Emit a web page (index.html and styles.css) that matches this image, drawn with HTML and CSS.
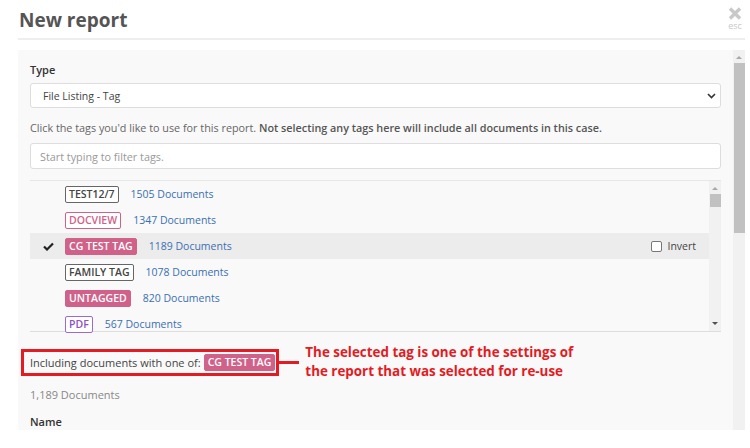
FILE: index.html
```html
<!DOCTYPE html>
<html lang="en">
<head>
  <meta charset="UTF-8">
  <title>New report</title>
  <link rel="stylesheet" href="styles.css">
</head>
<body>
  <div class="page">
    <header class="modal-head">
      <h1>New report</h1>
      <div class="close">
        <svg width="14" height="13" viewBox="0 0 14 13"><path d="M2 1.5 L12 11.5 M12 1.5 L2 11.5" stroke="#c9c9c9" stroke-width="3.4" stroke-linecap="butt"/></svg>
        <span>esc</span>
      </div>
    </header>

    <div class="panel">
      <div class="panel-body">
        <div class="field-label">Type</div>
        <div class="select">
          <span>File Listing - Tag</span>
          <svg width="9" height="6" viewBox="0 0 9 6"><path d="M1 1 L4.5 4.5 L8 1" fill="none" stroke="#333" stroke-width="1.6"/></svg>
        </div>
        <p class="help">Click the tags you'd like to use for this report. <strong>Not selecting any tags here will include all documents in this case.</strong></p>
        <div class="filter">Start typing to filter tags.</div>

        <div class="tag-list">
          <ul class="rows">
            <li class="row"><span class="check"></span><span class="tag outline">TEST12/7</span><a class="docs">1505 Documents</a></li>
            <li class="row"><span class="check"></span><span class="tag outline pink">DOCVIEW</span><a class="docs">1347 Documents</a></li>
            <li class="row selected">
              <span class="check">
                <svg width="11" height="9" viewBox="0 0 11 9"><path d="M1 4.5 L4 7.5 L10 1.5" fill="none" stroke="#222" stroke-width="2.2"/></svg>
              </span>
              <span class="tag solid">CG TEST TAG</span><a class="docs">1189 Documents</a>
              <label class="invert"><span class="box"></span>Invert</label>
            </li>
            <li class="row"><span class="check"></span><span class="tag outline">FAMILY TAG</span><a class="docs">1078 Documents</a></li>
            <li class="row"><span class="check"></span><span class="tag solid">UNTAGGED</span><a class="docs">820 Documents</a></li>
            <li class="row"><span class="check"></span><span class="tag outline purple">PDF</span><a class="docs">567 Documents</a></li>
          </ul>
          <div class="mini-scroll">
            <span class="arrow up light"></span>
            <span class="mini-thumb"></span>
            <span class="mini-track"></span>
            <span class="arrow down"></span>
          </div>
        </div>

        <div class="including-row">
          <div class="callout-box">Including documents with one of: <span class="tag solid">CG TEST TAG</span></div>
          <span class="connector"></span>
          <p class="note">The selected tag is one of the settings of<br>the report that was selected for re-use</p>
        </div>

        <div class="count">1,189 Documents</div>
        <div class="field-label name">Name</div>
      </div>

      <div class="scrollbar">
        <span class="arrow up light"></span>
        <span class="thumb"></span>
      </div>
    </div>
  </div>
</body>
</html>
```

FILE: styles.css
```css
body {
  margin: 0;
  background: #fff;
  font-family: "Open Sans", "Noto Sans", sans-serif;
  color: #444;
}
.page {
  width: 727px;
  padding-left: 18px;
}
.modal-head {
  display: flex;
  justify-content: space-between;
  align-items: flex-start;
  height: 38px;
  border-bottom: 2px solid #eee;
  margin-bottom: 10px;
}
.modal-head h1 {
  margin: 6px 0 0 1px;
  font-size: 19px;
  line-height: 28px;
  font-weight: 700;
  color: #555;
}
.close {
  display: flex;
  flex-direction: column;
  align-items: center;
  margin: 7px 3px 0 0;
}
.close span {
  font-size: 9px;
  line-height: 10px;
  color: #c9c9c9;
  margin-top: 1px;
}

.panel {
  display: flex;
  height: 380px;
  background: #f9f9f9;
  overflow: hidden;
}
.panel-body {
  flex: 1;
  padding: 12px 12px 0 12px;
  overflow: hidden;
}
.scrollbar {
  width: 12px;
  background: #f1f1f1;
  display: flex;
  flex-direction: column;
  align-items: center;
}
.scrollbar .thumb {
  width: 11px;
  height: 170px;
  background: #c1c1c1;
}
.arrow {
  width: 0;
  height: 0;
  border-left: 3px solid transparent;
  border-right: 3px solid transparent;
}
.arrow.up {
  border-bottom: 3px solid #505050;
  margin: 6px 0 4px;
}
.arrow.up.light { border-bottom-color: #a8a8a8; }
.arrow.down {
  border-top: 3px solid #505050;
  margin: 4px 0 6px;
}

.field-label {
  font-size: 11px;
  line-height: 16px;
  font-weight: 600;
  color: #333;
  margin-bottom: 5px;
}
.select {
  height: 23px;
  background: #fff;
  border: 1px solid #ddd;
  border-radius: 3px;
  display: flex;
  align-items: center;
  justify-content: space-between;
  padding: 0 4px 0 12px;
  font-size: 10.5px;
  color: #444;
}
.help {
  margin: 12px 0 7px;
  font-size: 10.8px;
  line-height: 16px;
  color: #666;
}
.help strong {
  font-weight: 600;
  color: #555;
}
.filter {
  height: 24px;
  background: #fff;
  border: 1px solid #ddd;
  border-radius: 3px;
  display: flex;
  align-items: center;
  padding-left: 9px;
  font-size: 10.8px;
  color: #999;
  margin-bottom: 11px;
}

.tag-list {
  display: flex;
  height: 150px;
  border-top: 1px solid #e6e6e6;
  border-bottom: 1px solid #ddd;
}
.rows {
  flex: 1;
  margin: 0;
  padding: 0;
  list-style: none;
}
.row {
  display: flex;
  align-items: center;
  height: 26px;
}
.row.selected { background: #ececec; }
.check {
  width: 35px;
  display: flex;
  justify-content: center;
  padding-left: 2px;
  box-sizing: border-box;
}
.tag {
  display: inline-block;
  font-size: 10.5px;
  line-height: 15px;
  font-weight: 600;
  padding: 0 3px;
  border: 1px solid #666;
  border-radius: 2px;
  color: #444;
  background: #fff;
}
.tag.pink { border-color: #d0628a; color: #d0628a; }
.tag.purple { border-color: #9b6ad6; color: #8a52c8; }
.tag.solid {
  background: #d0628a;
  border-color: #d0628a;
  color: #fff;
}
.docs {
  margin-left: 12px;
  font-size: 10.5px;
  color: #3a6fb4;
}
.invert {
  margin-left: auto;
  margin-right: 13px;
  display: flex;
  align-items: center;
  font-size: 10.5px;
  color: #444;
}
.invert .box {
  width: 9px;
  height: 9px;
  border: 1px solid #777;
  border-radius: 2px;
  background: #fff;
  margin-right: 5px;
}
.mini-scroll {
  width: 12px;
  background: #f1f1f1;
  display: flex;
  flex-direction: column;
  align-items: center;
}
.mini-thumb {
  width: 11px;
  height: 13px;
  background: #c1c1c1;
}
.mini-track { flex: 1; }

.including-row {
  display: flex;
  align-items: center;
  margin: 11px 0 0 -9px;
}
.callout-box {
  border: 3px solid #e41b23;
  padding: 2px 1px 2px 6px;
  font-size: 11px;
  color: #444;
  display: flex;
  align-items: center;
  gap: 3px;
}
.connector {
  width: 20px;
  height: 3px;
  background: #e41b23;
}
.note {
  margin: 0 0 0 6px;
  font-size: 13.4px;
  line-height: 19px;
  font-weight: 700;
  color: #e41b23;
}
.count {
  margin-top: 6px;
  font-size: 11px;
  line-height: 16px;
  color: #888;
}
.field-label.name { margin-top: 11px; }
```
